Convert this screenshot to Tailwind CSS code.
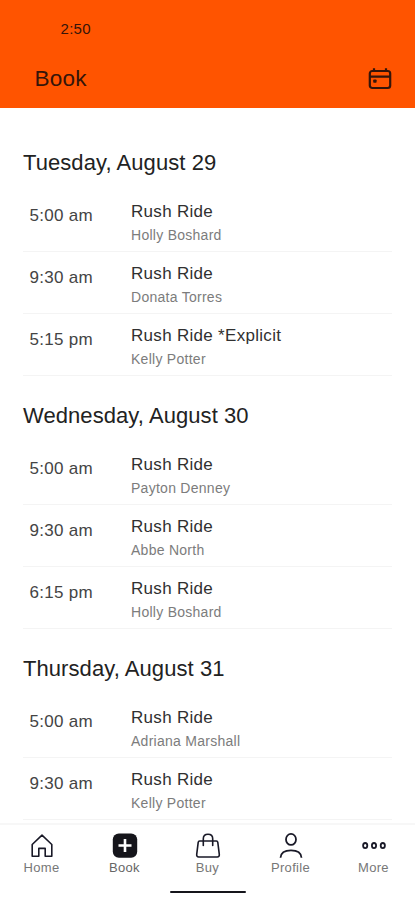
<!DOCTYPE html>
<html lang="en">
<head>
<meta charset="utf-8">
<meta name="viewport" content="width=device-width, initial-scale=1">
<title>Book</title>
<script src="https://cdn.jsdelivr.net/npm/@tailwindcss/browser@4"></script>
</head>
<body class="bg-white font-['Liberation_Sans',Arial,sans-serif]">
<div class="flex h-[900px] w-[415px] flex-col overflow-hidden">
  <header class="h-[108px] shrink-0 bg-[#ff5400] text-[#35150a]">
    <div class="pt-[19px] pl-[60.5px] text-[15px] leading-[20px] tracking-[0.3px]">2:50</div>
    <div class="flex items-center justify-between pt-[25px] pr-[23px] pl-[34.5px]">
      <h1 class="text-[22.5px] leading-[30px] tracking-[0.2px]">Book</h1>
      <svg class="size-6" viewBox="0 0 24 24" fill="none" stroke="currentColor" stroke-width="2.2"><rect x="1.8" y="4" width="20.4" height="17" rx="2.5"/><path d="M2 9.700h20M6 1.2V5M18 1.2V5"/><rect x="5.2" y="12.4" width="3.4" height="3.4" rx=".8" fill="currentColor" stroke="none"/></svg>
    </div>
  </header>
  <main class="flex min-h-0 flex-1 flex-col overflow-hidden px-[23px] pt-[15px] text-[#303030]" id="days"></main>
  <nav class="flex h-[77px] shrink-0 flex-col border-t-2 border-[#f7f7f7] bg-white text-[#191927]">
    <div class="grid h-[51px] grid-cols-5 pt-[8px] text-center text-[13px] leading-[16px] tracking-[0.3px]">
      <div class="flex flex-col items-center gap-[1px]"><svg class="size-[26px]" viewBox="0 0 26 26" fill="none" stroke="currentColor" stroke-width="1.6"><path d="M3.2 11.5 13 2.2l9.8 9.3v11.7h-6.6v-7.8H9.8v7.8H3.2z" stroke-linejoin="round"/></svg><span class="text-[#777]">Home</span></div>
      <div class="flex flex-col items-center gap-[1px]"><svg class="size-[26px]" viewBox="0 0 26 26"><rect x=".8" y=".5" width="24.4" height="24.2" rx="6" fill="#15151b"/><path d="M13 6v13M6.5 12.5h13" stroke="#fff" stroke-width="2.6"/></svg><span class="text-[#666]">Book</span></div>
      <div class="flex flex-col items-center gap-[1px]"><svg class="size-[26px]" viewBox="0 0 26 26" fill="none" stroke="currentColor" stroke-width="1.6" stroke-linejoin="round" stroke-linecap="round"><path d="M4.600 8h16.800q1.200 0 1.400 1.400l1.500 12q.2 2.600-2 2.600H3.700q-2.200 0-2-2.600l1.500-12Q3.400 8 4.600 8zM8.300 12.500V5.700q0-4.500 4.700-4.500t4.700 4.500v6.800"/></svg><span class="text-[#777]">Buy</span></div>
      <div class="flex flex-col items-center gap-[1px]"><svg class="size-[26px]" viewBox="0 0 26 26" fill="none" stroke="currentColor" stroke-width="1.8"><ellipse cx="13" cy="6.400" rx="5" ry="5.500"/><path d="M2.500 24.700c.4-5 4-7.300 10.500-7.300s10.100 2.300 10.500 7.300"/></svg><span class="text-[#777]">Profile</span></div>
      <div class="flex flex-col items-center gap-[1px]"><svg class="size-[26px]" viewBox="0 0 26 26" fill="none" stroke="currentColor" stroke-width="1.8"><ellipse cx="4.200" cy="12.600" rx="2.100" ry="2.600"/><ellipse cx="13" cy="12.600" rx="2.100" ry="2.600"/><ellipse cx="21.800" cy="12.600" rx="2.100" ry="2.600"/></svg><span class="text-[#777]">More</span></div>
    </div>
    <div class="mt-[15px] h-[2px] w-[76px] self-center rounded-full bg-[#15151b]"></div>
  </nav>
</div>
<script>
const days = [
  ["Tuesday, August 29", [["5:00 am","Rush Ride","Holly Boshard"],["9:30 am","Rush Ride","Donata Torres"],["5:15 pm","Rush Ride *Explicit","Kelly Potter"]]],
  ["Wednesday, August 30", [["5:00 am","Rush Ride","Payton Denney"],["9:30 am","Rush Ride","Abbe North"],["6:15 pm","Rush Ride","Holly Boshard"]]],
  ["Thursday, August 31", [["5:00 am","Rush Ride","Adriana Marshall"],["9:30 am","Rush Ride","Kelly Potter"]]]
];
document.getElementById("days").innerHTML = days.map(([day, rides]) => `
  <section class="shrink-0">
    <h2 class="flex h-[66.9px] items-center pt-[12px] text-[22px] text-[#222] tracking-[0.070px]">${day}</h2>
    ${rides.map(([time, name, coach]) => `
    <div class="flex h-[62px] border-b border-[#f4f4f4] pl-[6.5px]">
      <div class="w-[101.500px] pt-[16px] text-[17px] leading-[20px] tracking-[0.3px] text-[#444]">${time}</div>
      <div class="pt-[11px]">
        <div class="text-[17px] leading-[22px] tracking-[0.300px]">${name}</div>
        <div class="pt-[3px] text-[14px] leading-[18px] tracking-[0.270px] text-[#7c7c7c]">${coach}</div>
      </div>
    </div>`).join("")}
  </section>`).join("");
</script>
</body>
</html>
